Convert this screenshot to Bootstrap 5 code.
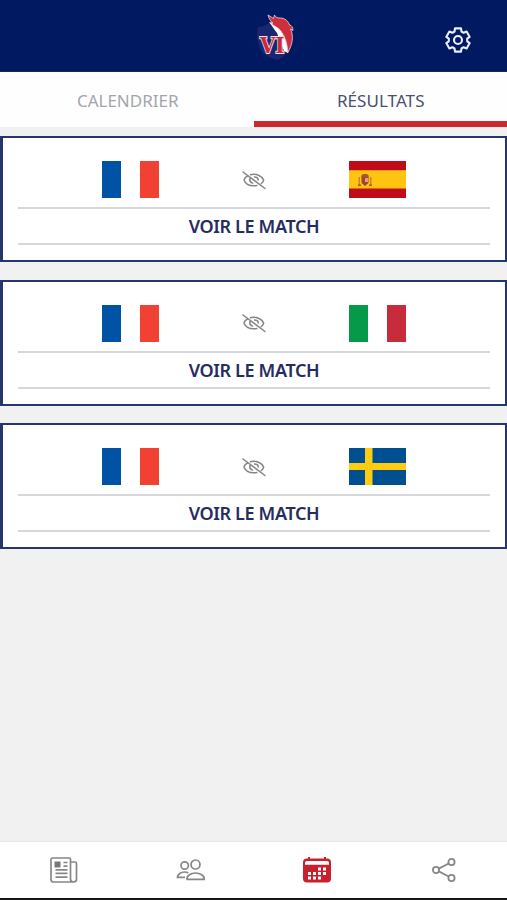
<!DOCTYPE html>
<html lang="fr">
<head>
<meta charset="utf-8">
<meta name="viewport" content="width=device-width, initial-scale=1">
<title>Résultats</title>
<link href="https://cdn.jsdelivr.net/npm/bootstrap@5.3.0/dist/css/bootstrap.min.css" rel="stylesheet">
<style>
body{font-family:"Noto Sans","Open Sans",sans-serif;background:#f1f1f1;height:900px;overflow:hidden}
.topbar{height:72px;background:#001960;border-bottom:1px solid #17275f}
.topbar svg,.tabbar svg,.match svg{display:block}
.side{width:98px}
.brand-mark{margin-left:45px;margin-top:4px}
.gear{margin-top:8px}
.tabs{height:55px;background:#fefeff}
.tab-item{font-size:17px;line-height:24px;padding-top:17px;color:#a3a5ab;text-decoration:none}
.tab-item span{display:inline-block;margin-left:2px}
.tab-item.active{color:#4b4f70;border-bottom:6px solid #c92a31}
.tab-item.active span{margin-left:1px;letter-spacing:.05px}
.results{padding-top:9px}
.match{height:126px;border:2px solid #26356b;border-left-width:3px;background:#fff;padding:0 15px}
.match+.match{margin-top:17.5px}
.teams{height:71px;padding:0 50.5px;border-bottom:2px solid #d6d7d9}
.teams>div{padding-top:14px}
.watch{height:36px;border:0;border-bottom:2px solid #d6d7d9;background:none;color:#262c5e;font-size:18px;font-weight:600;line-height:34px;padding:0;letter-spacing:-.36px}
.tabbar{height:59px;background:#fff;border-top:1px solid #e9e9e9;border-bottom:2px solid #151515}
.tabbar svg{margin-left:1px}
</style>
<script src="https://cdn.jsdelivr.net/npm/bootstrap@5.3.0/dist/js/bootstrap.bundle.min.js"></script>
</head>
<body class="d-flex flex-column">
<svg class="d-none">
  <symbol id="france" viewBox="0 0 57 37"><path fill="#fff" d="M0 0h57v37H0z"/><path fill="#0052a5" d="M0 0h19v37H0z"/><path fill="#f04133" d="M38 0h19v37H38z"/></symbol>
  <symbol id="hidden" viewBox="0 0 24 20"><g fill="none" stroke="#858585" stroke-width="1.5" stroke-linecap="round"><path d="M1 2 23 18.500M5.500 6C3.500 7 2.300 8.500 2 10c1.300 3.600 5 5.800 9.800 5.800 1 0 2-.1 3-.3M8.400 4.700c5.600-1.200 11.400.8 13.300 5.500-.3 1.300-1.200 2.400-2.400 3.300M8 8.600c-.6 2 .4 3.800 2.600 4.500M12.500 7c2.200 0 3.700 1.200 3.700 3"/></g></symbol>
</svg>

<header class="topbar d-flex align-items-center flex-shrink-0">
  <div class="side"></div>
  <div class="flex-fill d-flex justify-content-center">
    <svg class="brand-mark" width="42" height="52" viewBox="0 0 42 52">
      <path fill="#18276f" d="M3 15c5 0 8-2 11-4l21 20c-1 8-5 14-12 17C12 46 5 40 4 34 3 28 1 22 3 15z"/>
      <path fill="#fff" d="M14 10c3 4 5 7 8 11l7 18 4 2 3-11-4-13-9-5z"/>
      <path fill="#cf2f3d" stroke="#eadbe6" stroke-width=".8" d="M13 3l5.500 3.500L19.500 3c1 2.500 3 3 6 3 4 0 8 3 9 7 2 0 3.500 2.500 3.500 5.500l-2.500-1.500c3.500 7 2 16-3 24C33 32 29 22 24 17c-3-3-6-3-8-6l2 .2c-2-1.500-4-4-5-8.200z"/>
      <text x="5" y="41" textLength="24.500" lengthAdjust="spacingAndGlyphs" font-family="DejaVu Serif,serif" font-weight="700" font-size="23" fill="#cf2939" stroke="#e9e2ee" stroke-width="1.800" paint-order="stroke">VI</text>
    </svg>
  </div>
  <a class="side gear d-flex justify-content-center" href="#" aria-label="Paramètres">
    <svg width="28" height="28" viewBox="-14 -14 28 28" fill="none" stroke="#e9eefb" stroke-width="2.100" stroke-linejoin="round"><path d="M-3-11.600H3L3.500-8.500 5.600-7.200 8.600-8.500 11.700-3.100 9.200-1.300V1.300L11.700 3.100 8.600 8.500 5.600 7.200 3.500 8.500 3 11.600H-3L-3.500 8.500-5.600 7.200-8.600 8.500-11.700 3.100-9.200 1.300V-1.300L-11.700-3.100-8.600-8.500-5.600-7.200-3.500-8.500Z"/><circle r="4"/></svg>
  </a>
</header>

<nav class="tabs d-flex flex-shrink-0">
  <a class="tab-item w-50 text-center" href="#"><span>CALENDRIER</span></a>
  <a class="tab-item active w-50 text-center" href="#"><span>RÉSULTATS</span></a>
</nav>

<main class="results d-flex flex-column flex-grow-1">
  <section class="match flex-shrink-0">
    <div class="teams row g-0 align-items-center">
      <div class="col d-flex justify-content-center"><svg width="57" height="37"><use href="#france"/></svg></div>
      <div class="col d-flex justify-content-center"><svg width="24" height="20"><use href="#hidden"/></svg></div>
      <div class="col d-flex justify-content-center"><svg width="57" height="37" viewBox="0 0 57 37"><path fill="#c00b19" d="M0 0h57v37H0z"/><path fill="#ffc312" d="M0 9.200h57v18.400H0z"/><g fill="#a65b27"><path d="M12 15l2-2h4l2 2-1 2h-6z"/><path fill="#a4432f" d="M12.500 16h7v6l-3.500 3-3.500-3z"/><path fill="#c08a2a" d="M9.500 16H11v8H9.500zM21 16h1.500v8H21z"/><path d="M9 23.500h3V25H9zM20 23.500h3V25h-3z"/><path fill="#d5a18b" d="M16 17h3v4h-3z"/></g></svg></div>
    </div>
    <button class="watch w-100 text-center"><span>VOIR LE MATCH</span></button>
  </section>
  <section class="match flex-shrink-0">
    <div class="teams row g-0 align-items-center">
      <div class="col d-flex justify-content-center"><svg width="57" height="37"><use href="#france"/></svg></div>
      <div class="col d-flex justify-content-center"><svg width="24" height="20"><use href="#hidden"/></svg></div>
      <div class="col d-flex justify-content-center"><svg width="57" height="37" viewBox="0 0 57 37"><path fill="#fff" d="M0 0h57v37H0z"/><path fill="#07994a" d="M0 0h19v37H0z"/><path fill="#c72c3b" d="M38 0h19v37H38z"/></svg></div>
    </div>
    <button class="watch w-100 text-center"><span>VOIR LE MATCH</span></button>
  </section>
  <section class="match flex-shrink-0">
    <div class="teams row g-0 align-items-center">
      <div class="col d-flex justify-content-center"><svg width="57" height="37"><use href="#france"/></svg></div>
      <div class="col d-flex justify-content-center"><svg width="24" height="20"><use href="#hidden"/></svg></div>
      <div class="col d-flex justify-content-center"><svg width="57" height="37" viewBox="0 0 57 37"><path fill="#004f91" d="M0 0h57v37H0z"/><path fill="#fc1" d="M16 0h7.500v37H16zM0 15h57v7H0z"/></svg></div>
    </div>
    <button class="watch w-100 text-center"><span>VOIR LE MATCH</span></button>
  </section>
</main>

<footer class="tabbar row g-0 align-items-center flex-shrink-0">
  <a class="col d-flex justify-content-center" href="#" aria-label="Actualités"><svg width="28" height="26" viewBox="0 0 28 26" fill="none" stroke="#878787" stroke-width="1.700"><path d="M24 25H3.500Q1 25 1 22.500V2.500Q1 1 2.500 1H19Q20.500 1 20.500 2.500V22q0 3 3 3t3-3V6.500Q26.500 5 25 5h-4.500M5.500 12.800h12M5.500 16.400h12M5.500 20.200h12M13.500 5.500h4M13.500 9.200h4"/><path fill="#777" stroke="none" d="M4.500 4.500h6v6h-6z"/></svg></a>
  <a class="col d-flex justify-content-center" href="#" aria-label="Équipe"><svg width="30" height="22" viewBox="0 0 30 22" fill="none" stroke="#878787" stroke-width="1.700"><circle cx="8.700" cy="6.500" r="3.700"/><circle cx="19.500" cy="5.500" r="4.500"/><path d="M11 20.300C10.500 16.500 15 14 19.500 14s9.200 2.500 8.700 6.300ZM9 18.300H1.500c0-3 3.500-5.300 7-5.300q2.200 0 3.800.9"/></svg></a>
  <a class="col d-flex justify-content-center" href="#" aria-label="Calendrier"><svg width="28" height="26" viewBox="0 0 28 26"><rect y="1.500" width="28" height="24" rx="4" fill="#c9202e"/><path fill="#c9202e" d="M5 0h2v3H5zM21 0h2v3h-2z"/><path fill="#fff" d="M2 7.800V5.500Q2 4 4 4h20q2 0 2 1.500v2.300z"/><path fill="#fff" d="M15 10.500h3v3h-3zM20 10.500h3v3h-3zM5 15h3v3H5zM10 15h3v3h-3zM15 15h3v3h-3zM20 15h3v3h-3zM5 19.500h3v3H5zM10 19.500h3v3h-3zM15 19.500h3v3h-3z"/></svg></a>
  <a class="col d-flex justify-content-center" href="#" aria-label="Partager"><svg width="24" height="26" viewBox="0 0 24 26" fill="none" stroke="#878787" stroke-width="1.800"><circle cx="4" cy="13" r="3.100"/><circle cx="19.500" cy="5" r="3.100"/><circle cx="19.500" cy="21" r="3.100"/><path d="M6.800 11.600 16.700 6.500M6.800 14.400l9.900 5.100"/></svg></a>
</footer>
</body>
</html>
